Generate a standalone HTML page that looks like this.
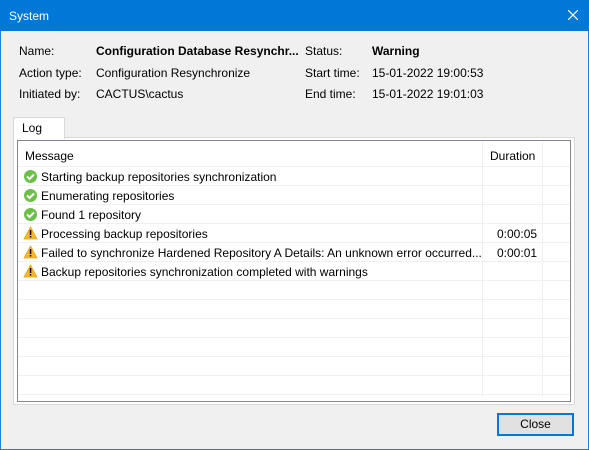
<!DOCTYPE html>
<html><head><style>
*{margin:0;padding:0;box-sizing:border-box}
body{width:589px;height:450px;overflow:hidden;background:#f0f0f0;font-family:"Liberation Sans",sans-serif;font-size:12px;color:#000;position:relative}
.win{position:absolute;left:0;top:0;width:589px;height:450px;border:1px solid #1883d7;border-top:none}
.title{position:absolute;left:0;top:0;width:589px;height:31px;background:#0078d7;color:#fff;font-size:12px}
.title span{position:absolute;left:9px;top:9px}
.a{position:absolute;white-space:nowrap}
.b{font-weight:bold}
.panel{position:absolute;left:13px;top:137px;width:562px;height:268px;border:1px solid #d9d9d9;background:#fff}
.tab{position:absolute;left:13px;top:117px;width:52px;height:22px;border:1px solid #d9d9d9;border-bottom:none;background:#fff}
.grid{position:absolute;left:17px;top:140px;width:554px;height:262px;border:1px solid #828790;background:#fff;overflow:hidden}
.hl{position:absolute;left:0;width:552px;height:1px;background:#f0f0f0}
.vl{position:absolute;top:0;width:1px;height:256px;background:#eef0f4}
.btn{position:absolute;left:497px;top:413px;width:77px;height:23px;border:2px solid #0078d7;background:#e1e1e1;text-align:center;line-height:19px}
</style></head><body>
<div class="win"></div>
<div class="title"><span>System</span>
<svg style="position:absolute;left:568px;top:10px" width="10" height="10"><path d="M0 0L10 10M10 0L0 10" stroke="#fff" stroke-width="1.2"/></svg></div>
<div class="a" style="left:19px;top:44px">Name:</div>
<div class="a b" style="left:96px;top:44px">Configuration Database Resynchr...</div>
<div class="a" style="left:19px;top:66px">Action type:</div>
<div class="a" style="left:96px;top:66px">Configuration Resynchronize</div>
<div class="a" style="left:19px;top:87px">Initiated by:</div>
<div class="a" style="left:96px;top:87px">CACTUS\cactus</div>
<div class="a" style="left:305px;top:44px">Status:</div>
<div class="a b" style="left:372px;top:44px">Warning</div>
<div class="a" style="left:305px;top:66px">Start time:</div>
<div class="a" style="left:372px;top:66px">15-01-2022 19:00:53</div>
<div class="a" style="left:305px;top:87px">End time:</div>
<div class="a" style="left:372px;top:87px">15-01-2022 19:01:03</div>
<div class="panel"></div>
<div class="tab"><span class="a" style="left:8px;top:3px">Log</span></div>
<div class="grid">
<div class="vl" style="left:464px"></div><div class="vl" style="left:524px"></div>
<div class="hl" style="top:25px"></div><div class="hl" style="top:44px"></div><div class="hl" style="top:63px"></div><div class="hl" style="top:82px"></div><div class="hl" style="top:101px"></div><div class="hl" style="top:120px"></div><div class="hl" style="top:139px"></div><div class="hl" style="top:158px"></div><div class="hl" style="top:177px"></div><div class="hl" style="top:196px"></div><div class="hl" style="top:215px"></div><div class="hl" style="top:234px"></div><div class="hl" style="top:253px"></div>
<div class="a" style="left:7px;top:8px">Message</div>
<div class="a" style="left:472px;top:8px">Duration</div>
</div>
<svg style="position:absolute;left:0;top:0" width="589" height="450">
<g id="ok"><circle cx="30.5" cy="176.5" r="6.5" fill="#6cbf47"/><path d="M27 176.5l2.5 2.5 4.5-4.5" stroke="#fff" stroke-width="2" fill="none"/></g>
<use href="#ok" y="19"/><use href="#ok" y="38"/>
<g id="w"><path d="M30.5 227L37 239H24Z" fill="#f6b82a" stroke="#e8a41a" stroke-width="0.8"/><rect x="29.8" y="230" width="1.5" height="5" fill="#000"/><rect x="29.8" y="236" width="1.5" height="1.5" fill="#000"/></g>
<use href="#w" y="19"/><use href="#w" y="38"/>
</svg>
<div class="a" style="left:41px;top:170px">Starting backup repositories synchronization</div>
<div class="a" style="left:41px;top:189px">Enumerating repositories</div>
<div class="a" style="left:41px;top:208px">Found 1 repository</div>
<div class="a" style="left:41px;top:227px">Processing backup repositories</div>
<div class="a" style="left:41px;top:246px">Failed to synchronize Hardened Repository A Details: An unknown error occurred...</div>
<div class="a" style="left:41px;top:265px">Backup repositories synchronization completed with warnings</div>
<div class="a" style="left:497px;top:227px">0:00:05</div>
<div class="a" style="left:497px;top:246px">0:00:01</div>
<div class="btn">Close</div>
</body></html>
